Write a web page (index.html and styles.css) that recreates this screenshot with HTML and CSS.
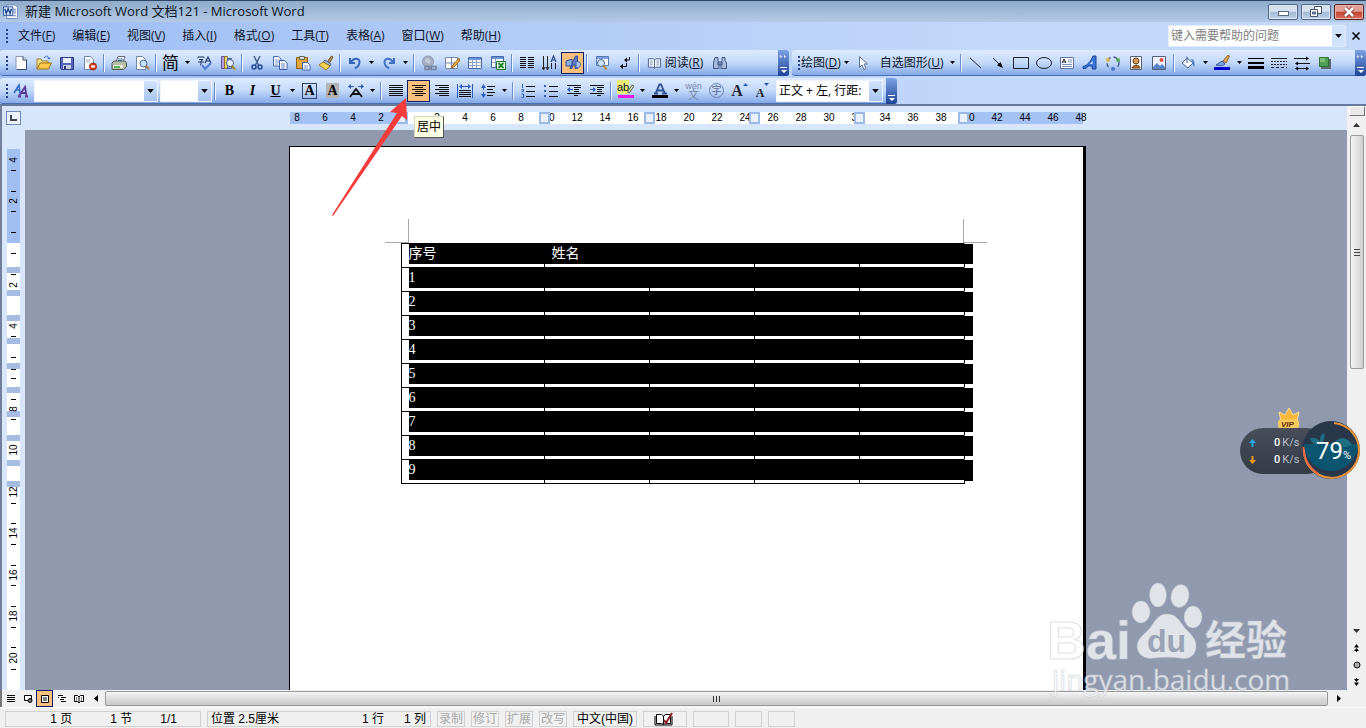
FILE: index.html
```html
<!DOCTYPE html>
<html lang="zh-CN">
<head>
<meta charset="utf-8">
<title>新建 Microsoft Word 文档121 - Microsoft Word</title>
<link rel="stylesheet" href="styles.css">
</head>
<body>
<svg class="defs" aria-hidden="true">
  <symbol id="arr" viewBox="0 0 5 3"><path d="M0 0h5L2.500 3z"/></symbol>
  <symbol id="cap" viewBox="0 0 11 26"><path d="M2 5l2 1.500-2 1.500zM6 5l2 1.500-2 1.500zM2 17h7v1H2zM3 20h6l-3 3z" fill="#fff"/></symbol>
</svg>

<header class="titlebar">
  <svg class="app" viewBox="0 0 16 16"><path d="M4 .5h9l2.500 2.500v12H4z" fill="#fff" stroke="#6d86b5"/><path d="M11 5h3M11 7h3M11 9h3M6 12h8" stroke="#5b7cbd"/><path d="M.5 2.500h10v9H.5z" fill="#e6effd" stroke="#24509e"/><path d="M2 4.500l1.500 5 2-5 2 5 1.500-5" fill="none" stroke="#174293" stroke-width="1.500"/></svg>
  <h1>新建 Microsoft Word 文档121 - Microsoft Word</h1>
  <div class="winbtns">
    <button class="wb" aria-label="最小化"><svg width="14" height="12"><rect x="2.500" y="5.500" width="10" height="4" fill="#fff" stroke="#5a6b85"/></svg></button>
    <button class="wb" aria-label="还原"><svg width="14" height="12"><path d="M5.500.500h7v7h-7z" fill="#fff" stroke="#465874"/><path d="M1.500 3.500h7v7h-7z" fill="#fff" stroke="#465874"/><path d="M3.500 6h3v2h-3z" fill="#8fa8c8" stroke="#465874"/></svg></button>
    <button class="wb close" aria-label="关闭"><svg width="14" height="12"><path d="M3 2l8 8M11 2l-8 8" stroke="#733" stroke-width="4"/><path d="M3 2l8 8M11 2l-8 8" stroke="#fff" stroke-width="2.500"/></svg></button>
  </div>
</header>

<div class="bars">
<nav class="menubar">
  <i class="grip"></i>
  <div class="menus">
    <button>文件(<u>F</u>)</button><button>编辑(<u>E</u>)</button><button>视图(<u>V</u>)</button><button>插入(<u>I</u>)</button><button>格式(<u>O</u>)</button><button>工具(<u>T</u>)</button><button>表格(<u>A</u>)</button><button>窗口(<u>W</u>)</button><button>帮助(<u>H</u>)</button>
  </div>
  <div class="ask"><input type="text" placeholder="键入需要帮助的问题" aria-label="键入需要帮助的问题"><button class="askarr" aria-label="展开"><svg class="tri big"><use href="#arr"/></svg></button></div>
  <button class="docx" aria-label="关闭文档"><svg width="8" height="8"><path d="M.5.500l7 7M7.500.500l-7 7" stroke="#000" stroke-width="1.500"/></svg></button>
</nav>

<div class="row">
  <div class="tb std" role="toolbar" aria-label="常用">
    <i class="grip"></i>
    <button class="b" aria-label="新建"><svg viewBox="0 0 16 16"><path d="M3 1.500h7l3.500 3.500v9.500H3z" fill="#fff" stroke="#8797b5"/><path d="M10 1.500V5h3.500v9.500H4" fill="none" stroke="#31456d"/></svg></button>
    <button class="b" aria-label="打开"><svg viewBox="0 0 16 16"><path d="M1 14V4h4l1 2h6v3" fill="#fbe48f" stroke="#a87a1c"/><path d="M1 14l3-6h11.500l-3 6z" fill="#ffc94d" stroke="#9c6d10"/><path d="M8 3c2-3 5-2 5 1l1.500-1M13 4l-1.500-1" fill="none" stroke="#3466b8"/></svg></button>
    <button class="b" aria-label="保存"><svg viewBox="0 0 16 16"><path d="M1.500 2.500h13v12h-12l-1-1z" fill="#5565bd" stroke="#2c3a80"/><path d="M4 3h8v5H4z" fill="#eaf0fd"/><path d="M4 10h8v4H4z" fill="#c7cfe8"/><path d="M5 11h2v3H5z" fill="#27346d"/></svg></button>
    <button class="b" aria-label="权限"><svg viewBox="0 0 16 16"><path d="M2.500 1.500h6l3 3v10h-9z" fill="#fff" stroke="#7183a7"/><path d="M4 5h5M4 7h4" stroke="#9ab"/><circle cx="11" cy="11.500" r="3.500" fill="#d6401f" stroke="#962a12"/><path d="M9 11.500h4" stroke="#fff" stroke-width="2"/></svg></button>
    <i class="sep"></i>
    <button class="b" aria-label="打印"><svg viewBox="0 0 16 16"><path d="M5 7l2-5.500h7L12 7z" fill="#fff" stroke="#667"/><path d="M7 4h5M7 5.500h4" stroke="#3b75c4"/><path d="M1 8l2-2h11l1.500 2v4l-3 2.500H1z" fill="#b5bfaa" stroke="#4d5a56"/><path d="M2 10h10v3H2z" fill="#e6ebd8"/><path d="M3 12h6" stroke="#2f9e37" stroke-width="1.500"/></svg></button>
    <button class="b" aria-label="打印预览"><svg viewBox="0 0 16 16"><path d="M2.500 1.500h6l3 3v10h-9z" fill="#fff" stroke="#7183a7"/><circle cx="9.500" cy="8.500" r="3.500" fill="#c5e2f8" stroke="#44658f"/><path d="M12 11l3 3" stroke="#a9803b" stroke-width="2"/></svg></button>
    <i class="sep"></i>
    <button class="b jian" aria-label="中文简繁转换">简</button><button class="a" aria-label="简繁选项"><svg class="tri"><use href="#arr"/></svg></button>
    <button class="b" aria-label="拼写和语法"><svg viewBox="0 0 16 16"><path d="M1 3V2h6v1M2 4.500h4L4 6M1 7h6M4 6v3.500l-1 .5" fill="none" stroke="#223a6b"/><path d="M8 8l3-6 3 6M9 6h4" fill="none" stroke="#223a6b" stroke-width="1.200"/><path d="M5 10l3 4 6-6" fill="none" stroke="#4f79cc" stroke-width="2"/></svg></button>
    <button class="b" aria-label="信息检索"><svg viewBox="0 0 16 16"><path d="M1.500 1.500h3v12h-3z" fill="#b59be0" stroke="#674f9c"/><path d="M4.500 1.500h3v12h-3z" fill="#ebd56b" stroke="#8c7625"/><path d="M7.500 3.500h4v10h-4z" fill="#8fb0e8" stroke="#3e609f"/><circle cx="10" cy="8" r="3.500" fill="#e5f2fd" stroke="#57617b"/><path d="M12 11l3 3.500" stroke="#a78422" stroke-width="2"/></svg></button>
    <i class="sep"></i>
    <button class="b" aria-label="剪切"><svg viewBox="0 0 16 16"><path d="M5 1l4.500 9M11 1L6.500 10" stroke="#486390" stroke-width="1.500"/><circle cx="5" cy="12" r="2" fill="none" stroke="#24489b" stroke-width="1.500"/><circle cx="11" cy="12" r="2" fill="none" stroke="#24489b" stroke-width="1.500"/></svg></button>
    <button class="b" aria-label="复制"><svg viewBox="0 0 16 16"><path d="M1.500 1.500h5l2.500 2.500v7H1.500z" fill="#fff" stroke="#4567ae"/><path d="M3 5h4M3 7h4M3 9h3" stroke="#7d9ad3"/><path d="M7.500 5.500h5l2.500 2.500v6.500H7.500z" fill="#fff" stroke="#3a5cab"/><path d="M9 9h4M9 11h4M9 13h4" stroke="#5f82cb"/></svg></button>
    <button class="b" aria-label="粘贴"><svg viewBox="0 0 16 16"><path d="M1.500 2.500h11v11h-11z" fill="#e2a83b" stroke="#8b6016"/><path d="M4.500 1.500h5v3h-5z" fill="#dcdcdc" stroke="#665"/><path d="M7.500 7.500h5l2.500 2.500v5H7.500z" fill="#fff" stroke="#3d60ab"/><path d="M9 11h4M9 13h4" stroke="#6e8fd0"/></svg></button>
    <button class="b" aria-label="格式刷"><svg viewBox="0 0 16 16"><path d="M9.500 6.500l4-5.500 1.500 1-3.500 6z" fill="#b58c50" stroke="#745226"/><path d="M7 5l6 4-1 2-7-4z" fill="#9fb3d8" stroke="#546a93"/><path d="M5 7l7 4-4 4-7-5z" fill="#f7d258" stroke="#a37a18"/></svg></button>
    <i class="sep"></i>
    <button class="b" aria-label="撤消"><svg viewBox="0 0 16 16"><path d="M3 3v5h5M3.500 7.500C7 2 13 3 12.500 7.500 12.300 10 10.500 12 8 13.500" fill="none" stroke="#3464bd" stroke-width="2"/></svg></button><button class="a" aria-label="撤消列表"><svg class="tri"><use href="#arr"/></svg></button>
    <button class="b" aria-label="恢复"><svg viewBox="0 0 16 16"><path d="M13 3v5H8M12.500 7.500C9 2 3 3 3.500 7.500 3.700 10 5.500 12 8 13.500" fill="none" stroke="#3f72c5" stroke-width="2"/></svg></button><button class="a" aria-label="恢复列表"><svg class="tri"><use href="#arr"/></svg></button>
    <i class="sep"></i>
    <button class="b" aria-label="超链接"><svg viewBox="0 0 16 16"><circle cx="7" cy="6.500" r="5.500" fill="#a3adbf" stroke="#8d99b0"/><path d="M4 4l3-1 3 3-2 3-4-2z" fill="#c1cad9"/><path d="M4 11.500h4v3H4zM10 11.500h5v3h-5zM7 13h4" fill="none" stroke="#75829c" stroke-width="1.500"/></svg></button>
    <button class="b" aria-label="表格和边框"><svg viewBox="0 0 16 16"><path d="M1.500 2.500h12v11h-12zM7.500 3v10M2 8h11" fill="#fff" stroke="#7587ad"/><path d="M15 3L9 10l-2 3 3-1 5.500-6z" fill="#efb23d" stroke="#9c641d"/></svg></button>
    <button class="b" aria-label="插入表格"><svg viewBox="0 0 16 16"><path d="M1.500 2.500h13v11h-13z" fill="#fff" stroke="#4467ab"/><path d="M2 3h12v2H2z" fill="#6c92d8"/><path d="M5.500 5v8M9.500 5v8M2 7.500h12M2 10.500h12" stroke="#8aa3cc"/></svg></button>
    <button class="b" aria-label="插入 Excel 工作表"><svg viewBox="0 0 16 16"><path d="M1.500 1.500h12v11h-12z" fill="#fff" stroke="#4467ab"/><path d="M2 2h11v2H2z" fill="#6c92d8"/><path d="M5.500 4v8M2 7.500h11" stroke="#8aa3cc"/><path d="M6.500 6.500h9v8h-9z" fill="#e7f5e5" stroke="#267a2d"/><path d="M8.500 8l5 5M13.500 8l-5 5" stroke="#208532" stroke-width="1.800"/></svg></button>
    <i class="sep"></i>
    <button class="b" aria-label="分栏"><svg viewBox="0 0 16 16"><path d="M1 3h6M1 5h6M1 7h6M1 9h6M1 11h6M1 13h6M9 3h6M9 5h6M9 7h6M9 9h6M9 11h6M9 13h6" transform="translate(0 -.5)" stroke="#111"/></svg></button>
    <button class="b" aria-label="更改文字方向"><svg viewBox="0 0 16 16"><path d="M1.500 1v13M5.500 1v13M9.500 8v6M13.500 8v6" stroke="#222"/><path d="M0 12l1.500 3L3 12M4 12l1.500 3L7 12" fill="none" stroke="#222"/><path d="M9 7l2.500-6L14 7M10 5h3" fill="none" stroke="#27488c" stroke-width="1.200"/></svg></button>
    <button class="b on" aria-label="绘图"><svg viewBox="0 0 16 16"><path d="M1 6l6-2v7H1z" fill="#8caae3" stroke="#35559d"/><path d="M5 13.500L10.500 1h2v12.500H10V10H8l-1 3.500z" fill="#5c80cc" stroke="#2b4a93"/><path d="M11 6.500c6-1 6 7 0 6.500z" fill="#aac1ed" stroke="#3b5fab"/></svg></button>
    <i class="sep"></i>
    <button class="b" aria-label="文档结构图"><svg viewBox="0 0 16 16"><path d="M2.500 1.500h12v9h-12z" fill="#fff" stroke="#5578b8"/><path d="M3 2h11v2H3z" fill="#7aa0df"/><circle cx="7" cy="8" r="3.500" fill="#cfe6f7" stroke="#476693"/><path d="M9.500 10.500l3 4" stroke="#b28a31" stroke-width="2"/></svg></button>
    <button class="b" aria-label="显示/隐藏编辑标记"><svg viewBox="0 0 16 16"><path d="M12.500 2v3H9M4 11.500h5.500V8" fill="none" stroke="#111"/><path d="M6 9v5l-3-2.500zM10 2.500v5L7 5z"/></svg></button>
    <i class="sep"></i>
    <button class="t read"><svg viewBox="0 0 16 16"><path d="M1.500 3.500h5l1.500 1 1.500-1h5v9h-5l-1.500 1-1.500-1h-5zM8 4.500v9" fill="#f5f8fe" stroke="#49618d"/><path d="M3 6h3M3 8h3M3 10h3M10 6h3M10 8h3M10 10h3" stroke="#8194b5"/></svg><span>阅读(<u>R</u>)</span></button>
    <button class="b" aria-label="查找"><svg viewBox="0 0 16 16"><path d="M3 2.500h3v3l1 3v5H1.500V8zM10 2.500h3v3l1.500 2.500v5.500H9v-5l1-3zM6 7h4v3H6z" fill="#a9bbdb" stroke="#3e5787"/></svg></button>
    <button class="cap" aria-label="工具栏选项"><svg><use href="#cap"/></svg></button>
  </div>
  <div class="tb draw" role="toolbar" aria-label="绘图">
    <i class="grip"></i>
    <button class="t">绘图(<u>D</u>)</button><button class="a" aria-label="绘图菜单"><svg class="tri"><use href="#arr"/></svg></button>
    <button class="b" aria-label="选择对象"><svg viewBox="0 0 16 16"><path d="M4.500 1.500v11l2.500-2.500 2 4.500 2-1-2-4.500h3.500z" fill="#f5f8ff" stroke="#667695"/></svg></button>
    <button class="t pad">自选图形(<u>U</u>)</button><button class="a" aria-label="自选图形菜单"><svg class="tri"><use href="#arr"/></svg></button>
    <i class="sep"></i>
    <button class="b" aria-label="直线"><svg viewBox="0 0 16 16"><path d="M3 3l11 10" stroke="#222"/></svg></button>
    <button class="b" aria-label="箭头"><svg viewBox="0 0 16 16"><path d="M3 3l7 7" stroke="#222"/><path d="M13 13l-6-2.500L10.500 7z"/></svg></button>
    <button class="b" aria-label="矩形"><svg viewBox="0 0 16 16"><path d="M.5 2.500h15v11H.500z" fill="none" stroke="#222"/></svg></button>
    <button class="b" aria-label="椭圆"><svg viewBox="0 0 16 16"><ellipse cx="8" cy="8" rx="7.500" ry="5.500" fill="none" stroke="#222"/></svg></button>
    <button class="b" aria-label="文本框"><svg viewBox="0 0 16 16"><path d="M1.500 2.500h13v11h-13z" fill="#fff" stroke="#5b75a8"/><path d="M3 8l2-4 2 4M4 7h2" fill="none" stroke="#223"/><path d="M9 5h4M9 7h4M3 9.500h10M3 11.500h10" stroke="#7f93b8"/></svg></button>
    <button class="b" aria-label="艺术字"><svg viewBox="0 0 16 16"><path d="M1 11.500C5 11 9 6 11 1h3v13h-4l.5-3H6l-2 2.500H1z" fill="#3f77d8" stroke="#1a4298"/><path d="M8 9h2.500V6z" fill="#e4eeff"/></svg></button>
    <button class="b" aria-label="图示"><svg viewBox="0 0 16 16"><circle cx="8" cy="8" r="6" fill="none" stroke="#4b6299" stroke-width="1.500" stroke-dasharray="4 3"/><circle cx="3" cy="5" r="2" fill="#dbb440"/><circle cx="13" cy="5" r="2" fill="#56a953"/><circle cx="8" cy="14" r="2" fill="#4e78cd"/></svg></button>
    <button class="b" aria-label="剪贴画"><svg viewBox="0 0 16 16"><path d="M2.500 1.500h11v13h-11z" fill="#fff" stroke="#555f78"/><circle cx="8" cy="6" r="3" fill="#d99d50" stroke="#563c1a"/><path d="M4 13c0-3 8-4 8 0z" fill="#c1752c" stroke="#60411d"/></svg></button>
    <button class="b" aria-label="图片"><svg viewBox="0 0 16 16"><path d="M1.500 1.500h13v13h-13z" fill="#eef4ff" stroke="#555f78"/><circle cx="10.500" cy="5" r="2" fill="#df5040"/><path d="M2 12l4-4 3 3 2-2 3.500 3.500V14H2z" fill="#5884c8"/></svg></button>
    <i class="sep"></i>
    <button class="b" aria-label="填充颜色"><svg viewBox="0 0 16 16"><path d="M2 8l5-5 6 5-5 5z" fill="#f6f9ff" stroke="#4c628d"/><path d="M7 8V1.500" stroke="#4c628d"/><path d="M11 4c3 0 4 3 3.500 8-1.500-1-2-3-2-5z" fill="#4b80ca"/></svg></button><button class="a" aria-label="填充颜色列表"><svg class="tri"><use href="#arr"/></svg></button>
    <button class="b" aria-label="线条颜色"><svg viewBox="0 0 16 16"><path d="M9 6l5-6 1.500 1L12 8z" fill="#e3a745" stroke="#8a6326"/><path d="M2 10l6-4 3 3c-2 2-5 2-9 1z" fill="#7fa3de" stroke="#3a5996"/><path d="M0 12h16v3H0z" fill="#00c"/></svg></button><button class="a" aria-label="线条颜色列表"><svg class="tri"><use href="#arr"/></svg></button>
    <button class="b" aria-label="线型"><svg viewBox="0 0 16 16"><path d="M0 3h16v1H0zM0 7h16v2H0zM0 11h16v3H0z"/></svg></button>
    <button class="b" aria-label="虚线线型"><svg viewBox="0 0 16 16"><path d="M0 3.500h16" stroke="#222"/><path d="M0 6.500h16M0 9.500h16" stroke="#222" stroke-dasharray="2 1"/><path d="M0 12.500h16" stroke="#222" stroke-dasharray="3 2"/></svg></button>
    <button class="b" aria-label="箭头样式"><svg viewBox="0 0 16 16"><path d="M0 3.500h13M3 8.500h13M2 13.500h12" stroke="#111"/><path d="M12 1.500l3 2-3 2zM4 6.500l-3 2 3 2zM4 11.500l-3 2 3 2zM12 11.500l3 2-3 2z"/></svg></button>
    <button class="b" aria-label="阴影样式"><svg viewBox="0 0 16 16"><path d="M4 4h10v10H4z" fill="#5b6b70"/><path d="M2.500 2.500h9v9h-9z" fill="#4ea150" stroke="#2c7131"/><path d="M3 3h5v4H3z" fill="#7ec07b"/></svg></button>
    <button class="cap" aria-label="工具栏选项"><svg><use href="#cap"/></svg></button>
  </div>
</div>

<div class="row last">
  <div class="tb" role="toolbar" aria-label="格式">
    <i class="grip"></i>
    <button class="b" aria-label="样式和格式"><svg viewBox="0 0 16 16"><path d="M1 10l5-8 1 8M3 7h4" fill="none" stroke="#2f6ac4" stroke-width="1.500"/><path d="M6 13l6-9 1.500 9M8 10h5M5 13.500h3M12 13.500h3" fill="none" stroke="#5a3b9c" stroke-width="1.800"/></svg></button>
    <span class="combo style"><select aria-label="样式"><option></option></select><i><svg class="tri big"><use href="#arr"/></svg></i></span>
    <span class="combo size"><select aria-label="字号"><option></option></select><i><svg class="tri big"><use href="#arr"/></svg></i></span>
    <i class="sep"></i>
    <button class="b ser" aria-label="加粗">B</button><button class="b ser it" aria-label="倾斜">I</button><button class="b ser"><u>U</u></button><button class="a" aria-label="下划线列表"><svg class="tri"><use href="#arr"/></svg></button>
    <button class="b ser" aria-label="字符边框"><span class="boxed">A</span></button><button class="b ser" aria-label="字符底纹"><span class="shade">A</span></button>
    <button class="b" aria-label="字符缩放"><svg viewBox="0 0 16 16"><path d="M2 14l6-8 6 8M4 11h8" fill="none" stroke="#111" stroke-width="1.800"/><path d="M1 3.500h5M10 3.500h5" stroke="#2a5cc0"/><path d="M3 1L0 3.500 3 6zM13 1l3 2.500L13 6z" fill="#2a5cc0"/></svg></button><button class="a" aria-label="字符缩放列表"><svg class="tri"><use href="#arr"/></svg></button>
    <i class="sep"></i>
    <button class="b" aria-label="两端对齐"><svg viewBox="0 0 16 16"><path d="M1 2.500h14M1 4.500h14M1 6.500h14M1 8.500h14M1 10.500h14M1 12.500h14" stroke="#111"/></svg></button>
    <button class="b on" aria-label="居中" aria-describedby="tip"><svg viewBox="0 0 16 16"><path d="M1 2.500h14M4 4.500h8M1 6.500h14M4 8.500h8M1 10.500h14M4 12.500h8" stroke="#111"/></svg></button>
    <button class="b" aria-label="右对齐"><svg viewBox="0 0 16 16"><path d="M1 2.500h14M5 4.500h10M1 6.500h14M5 8.500h10M1 10.500h14M5 12.500h10" stroke="#111"/></svg></button>
    <button class="b" aria-label="分散对齐"><svg viewBox="0 0 16 16"><path d="M.5 1v14M15.500 1v14M3 3.500h10" stroke="#2a5cc0"/><path d="M5 1L2 3.500 5 6zM11 1l3 2.500L11 6z" fill="#2a5cc0"/><path d="M2 7.500h12M2 9.500h12M2 11.500h12M2 13.500h12" stroke="#111"/></svg></button>
    <button class="b" aria-label="行距"><svg viewBox="0 0 16 16"><path d="M3.500 2v12" stroke="#2a5cc0" stroke-dasharray="5 2"/><path d="M1 5l2.500-4L6 5zM1 11l2.500 4L6 11z" fill="#2a5cc0"/><path d="M7 3.500h8M7 6.500h6M7 9.500h8M7 12.500h6" stroke="#111"/></svg></button><button class="a" aria-label="行距列表"><svg class="tri"><use href="#arr"/></svg></button>
    <i class="sep"></i>
    <button class="b" aria-label="编号"><svg viewBox="0 0 16 16"><path d="M2.500 1v4M1.500 6.500h2v2h-2M1.500 11h2v3.500h-2" fill="none" stroke="#2a5cc0"/><path d="M6 3.500h9M6 8.500h9M6 13.500h9" stroke="#111"/></svg></button>
    <button class="b" aria-label="项目符号"><svg viewBox="0 0 16 16"><path d="M1 2h2v2H1zM1 7h2v2H1zM1 12h2v2H1z" fill="#3563b8"/><path d="M6 3.500h9M6 8.500h9M6 13.500h9" stroke="#111"/></svg></button>
    <button class="b" aria-label="减少缩进量"><svg viewBox="0 0 16 16"><path d="M1 2.500h14M8 4.500h7M8 6.500h5M8 8.500h5M1 10.500h14M8 12.500h4" stroke="#111"/><path d="M1 6.500l3-2.500v2h3v1H4v2z" fill="#2a5cc0"/></svg></button>
    <button class="b" aria-label="增加缩进量"><svg viewBox="0 0 16 16"><path d="M1 2.500h14M8 4.500h7M8 6.500h5M8 8.500h5M1 10.500h14M8 12.500h4" stroke="#111"/><path d="M7 6.500L4 4v2H1v1h3v2z" fill="#2a5cc0"/></svg></button>
    <i class="sep"></i>
    <button class="b hl" aria-label="突出显示"><span>ab</span><svg viewBox="0 0 16 16"><path d="M10 8l4-6 2 1-4 6-2 1z" fill="#dce6b0" stroke="#5b6650"/><path d="M0 12h16v3H0z" fill="#e81ce8"/></svg></button><button class="a" aria-label="突出显示列表"><svg class="tri"><use href="#arr"/></svg></button>
    <button class="b" aria-label="字体颜色"><svg viewBox="0 0 16 16"><path d="M3.500 10.500l4-9h1.500l4 9M5.500 7.500h6M2 10.500h4M10 10.500h5" fill="none" stroke="#2c4f96" stroke-width="1.800"/><path d="M0 12h16v3H0z"/></svg></button><button class="a" aria-label="字体颜色列表"><svg class="tri"><use href="#arr"/></svg></button>
    <button class="b wen" aria-label="拼音指南"><span>wén</span><span>文</span></button>
    <button class="b" aria-label="带圈字符"><span class="ring">字</span></button>
    <button class="b ser grow" aria-label="增大字体">A<svg width="5" height="3"><path d="M0 3h5L2.500 0z" fill="#2a5cc0"/></svg></button>
    <button class="b ser grow small" aria-label="缩小字体">A<svg width="5" height="3"><path d="M0 0h5L2.500 3z" fill="#2a5cc0"/></svg></button>
    <span class="combo fmt"><select aria-label="格式"><option>正文 + 左, 行距:</option></select><i><svg class="tri big"><use href="#arr"/></svg></i></span>
    <button class="cap" aria-label="工具栏选项"><svg viewBox="0 0 11 26"><path d="M2 17h7v1H2zM3 20h6l-3 3z" fill="#fff"/></svg></button>
  </div>
</div>
</div>

<main class="work">
  <div class="pane">
    <div class="hruler">
      <button class="corner" aria-label="制表符"><svg width="7" height="6"><path d="M1 0v5h6" fill="none" stroke="#445" stroke-width="2"/></svg></button>
      <div class="center"><div class="scale">
        <div class="band">
          <span>8</span><span>6</span><span>4</span><span>2</span><span></span><span>2</span><span>4</span><span>6</span><span>8</span><span>10</span><span>12</span><span>14</span><span>16</span><span>18</span><span>20</span><span>22</span><span>24</span><span>26</span><span>28</span><span>30</span><span>32</span><span>34</span><span>36</span><span>38</span><span>40</span><span>42</span><span>44</span><span>46</span><span>48</span>
        </div>
        <div class="marks"><i></i><i></i><i></i><i></i><i></i><i></i></div>
        <div class="tip" id="tip" role="tooltip">居中</div>
      </div></div>
    </div>
    <div class="lower">
      <svg class="vruler" width="24" height="560" viewBox="0 0 24 560">
        <path d="M5 19h13v94H5z" fill="#a2bff2"/><path d="M5 113h13v447H5z" fill="#fff"/>
        <path d="M5 137h13v6H5zM5 160h13v6H5zM5 185h13v6H5zM5 208h13v6H5zM5 233h13v6H5zM5 257h13v6H5zM5 281h13v6H5zM5 305h13v6H5zM5 330h13v6H5zM5 351h13v6H5z" fill="#a5bde3"/>
        <path d="M9 40.500h5M9 61.500h5M9 81.500h5M9 102.500h5M9 123.500h5M9 144.500h5M9 206.500h5M9 227.500h5M9 239.500h5M9 248.500h5M9 269.500h5M9 289.500h5M9 373.500h5M9 393.500h5M9 414.500h5M9 435.500h5M9 455.500h5M9 476.500h5M9 497.500h5M9 517.500h5M9 539.500h5" stroke="#000"/>
        <g class="vnum"><text transform="translate(15 30)rotate(-90)">4</text><text transform="translate(15 71)rotate(-90)">2</text><text transform="translate(15 155)rotate(-90)">2</text><text transform="translate(15 196)rotate(-90)">4</text><text transform="translate(15 279)rotate(-90)">8</text><text transform="translate(15 320)rotate(-90)">10</text><text transform="translate(15 362)rotate(-90)">12</text><text transform="translate(15 403)rotate(-90)">14</text><text transform="translate(15 445)rotate(-90)">16</text><text transform="translate(15 486)rotate(-90)">18</text><text transform="translate(15 528)rotate(-90)">20</text></g>
      </svg>
      <div class="desk">
        <article class="page">
          <div class="crops"><i class="cl"></i><i class="cr"></i></div>
          <table>
            <colgroup><col class="c1"><col class="cn"><col class="cn"><col class="cn"><col class="cn"><col class="ce"></colgroup>
            <tr><td>序号</td><td class="name" colspan="2">姓名</td><td></td><td></td><td></td></tr>
            <tr><td>1</td><td></td><td></td><td></td><td></td><td></td></tr>
            <tr><td>2</td><td></td><td></td><td></td><td></td><td></td></tr>
            <tr><td>3</td><td></td><td></td><td></td><td></td><td></td></tr>
            <tr><td>4</td><td></td><td></td><td></td><td></td><td></td></tr>
            <tr><td>5</td><td></td><td></td><td></td><td></td><td></td></tr>
            <tr><td>6</td><td></td><td></td><td></td><td></td><td></td></tr>
            <tr><td>7</td><td></td><td></td><td></td><td></td><td></td></tr>
            <tr><td>8</td><td></td><td></td><td></td><td></td><td></td></tr>
            <tr><td>9</td><td></td><td></td><td></td><td></td><td></td></tr>
          </table>
        </article>
      </div>
    </div>
  </div>
  <div class="vscroll">
    <i class="split"></i>
    <button aria-label="向上"><svg width="7" height="4"><path d="M0 4h7L3.500 0z" fill="#333"/></svg></button>
    <div class="vtrack"><div class="vthumb"><i></i><i></i><i></i></div></div>
    <button aria-label="向下"><svg width="7" height="4"><path d="M0 0h7L3.500 4z" fill="#333"/></svg></button>
    <button aria-label="前一页"><svg width="7" height="8"><path d="M1 3.500L3.500 0 6 3.500zM1 7L3.500 4 6 7zM3 6h1v2H3z"/></svg></button>
    <button aria-label="选择浏览对象"><svg width="8" height="8"><circle cx="4" cy="4" r="3" fill="#aaa" stroke="#000"/></svg></button>
    <button aria-label="下一页"><svg width="7" height="8"><path d="M1 1h5L3.500 4zM1 4.500h5L3.500 8zM3 0h1v2H3z"/></svg></button>
  </div>
</main>

<div class="hscroll">
  <div class="views">
    <button aria-label="普通视图"><svg viewBox="0 0 12 12"><path d="M2 2.500h8M2 4.500h8M2 6.500h8M2 8.500h8" stroke="#000"/></svg></button>
    <button aria-label="Web 版式视图"><svg viewBox="0 0 12 12"><path d="M2.500 2.500h7v5h-7z" fill="#fff" stroke="#000"/><circle cx="8" cy="7.500" r="2" fill="#777" stroke="#000"/></svg></button>
    <button class="on" aria-label="页面视图"><svg viewBox="0 0 12 12"><path d="M2.500 2.500h7v7h-7zM4 5h4M4 7h4" fill="#fff" stroke="#000"/></svg></button>
    <button aria-label="大纲视图"><svg viewBox="0 0 12 12"><path d="M2 2.500h5M5 4.500h5M4 6.500h4M5 8.500h5M2 4.500h1" stroke="#000"/></svg></button>
    <button aria-label="阅读版式"><svg viewBox="0 0 12 12"><path d="M1.500 2.500h3L6 4l1.500-1.500h3v6h-3L6 10 4.500 8.500h-3zM6 4v6M3 5h1M3 7h1M8 5h1M8 7h1" fill="#fff" stroke="#000"/></svg></button>
  </div>
  <button class="ha" aria-label="向左"><svg width="4" height="7"><path d="M4 0v7L0 3.500z"/></svg></button>
  <div class="hthumb"><i></i><i></i><i></i></div>
  <button class="ha right" aria-label="向右"><svg width="4" height="7"><path d="M0 0v7l4-3.500z"/></svg></button>
</div>

<footer class="status">
  <div class="f f1"><span>1 页</span><span>1 节</span><span>1/1</span></div>
  <div class="f f2"><span>位置 2.5厘米</span><span class="ln">1 行</span><span>1 列</span></div>
  <div class="f dim">录制</div><div class="f dim">修订</div><div class="f dim">扩展</div><div class="f dim">改写</div>
  <div class="f lang">中文(中国)</div>
  <div class="f book"><svg width="19" height="14"><path d="M2.500 2.500h5l2 1.500 2-1.500h5v9h-5l-2 1-2-1h-5zM9.500 4v8" fill="#fff" stroke="#000"/><path d="M1 4v9h17V4" fill="none" stroke="#000"/><path d="M10 8l2 3 6-10" fill="none" stroke="#8c1c24" stroke-width="2"/></svg></div>
  <div class="f e1"></div><div class="f e2"></div><div class="f e2"></div>
</footer>

<svg class="pointer" width="80" height="122" viewBox="0 0 80 122" aria-hidden="true"><path d="M75 2L59 16l7 1L1 119l1 1L71 20l5 4z" fill="#f23c3c"/></svg>

<aside class="meter">
  <svg class="crown" width="24" height="24" viewBox="0 0 24 24"><path d="M4 14L2 5l6 3 4-7 4 7 6-3-2 9z" fill="#f7b73b" stroke="#fbe19c"/><rect x="1" y="12" width="21" height="10" rx="4" fill="#fbca5e"/><text x="4" y="20">VIP</text></svg>
  <div class="speed">
    <p><svg width="7" height="8"><path d="M3.500 0L7 4H4.500v4h-2V4H0z" fill="#22a7e0"/></svg><b>0</b>K/s</p>
    <p><svg width="7" height="8"><path d="M3.500 8L7 4H4.500V0h-2v4H0z" fill="#f29a1f"/></svg><b>0</b>K/s</p>
  </div>
  <div class="dial"><svg width="60" height="60" viewBox="0 0 60 60"><circle cx="30" cy="30" r="29" fill="#28384a"/><path d="M3 24a27 27 0 0 0 54 0z" fill="#0b5570"/><path d="M9 18c5-1 8 0 10 4 0-5 1-8 4-9 2 6-1 11-7 11-4 0-6-2-7-6zM34 22c4-6 14-5 17 3-6 3-11 3-17-3z" fill="#1f6d80"/><path d="M33 3A27.500 27.500 0 1 1 3 30" fill="none" stroke="#e6923a" stroke-width="2"/><path d="M2.500 27c0 12 6 21 15 27" fill="none" stroke="#e96a4a" stroke-width="2"/></svg><span>79<small>%</small></span></div>
</aside>

<svg class="mark" width="250" height="120" viewBox="0 0 250 120" aria-hidden="true">
  <g fill="#fff" fill-opacity=".72" stroke="#b9bfcb" stroke-opacity=".5">
    <text class="bai" x="1" y="79">Bai</text>
    <ellipse cx="95" cy="32" rx="9" ry="11"/><ellipse cx="112" cy="15" rx="8.500" ry="12"/><ellipse cx="134" cy="16" rx="9" ry="11.500" transform="rotate(12 134 16)"/><ellipse cx="147" cy="37" rx="9" ry="11"/>
    <path d="M121 34c9 0 12 6 17 13 6 7 13 11 12 21-1 9-9 12-17 10-8-1-16-1-24 0-10 2-17-3-18-11 0-9 7-12 13-19 5-7 8-14 17-14z"/>
    <text class="jy" x="159" y="75">经验</text>
    <text class="url" x="6" y="110">jingyan.baidu.com</text>
  </g>
  <text class="du" x="101" y="72">du</text>
</svg>
</body>
</html>
```
FILE: styles.css
```css
* { box-sizing: border-box; }
body {
  margin: 0; height: 100vh; overflow: hidden; position: relative;
  display: flex; flex-direction: column;
  font: 12px/16px "Open Sans", "Noto Sans CJK SC", sans-serif; color: #0c1526; background: #f0f0f0;
}
button { border: 0; padding: 0; margin: 0; background: none; font: inherit; color: inherit; display: flex; align-items: center; justify-content: center; }
i { display: block; font-style: normal; }
svg { display: block; flex: none; }
.defs { position: absolute; width: 0; height: 0; }

.titlebar { flex: none; height: 22px; display: flex; align-items: center; padding: 0 2px 0 3px; gap: 7px; border-top: 1px solid #2b4468; background: linear-gradient(#8fabc9, #b3cae6); }
.app { width: 15px; height: 16px; }
h1 { margin: 0; font-size: 13px; font-weight: 400; line-height: 18px; padding-bottom: 2px; flex: 1; }
.winbtns { display: flex; gap: 3px; }
.wb { width: 30px; height: 16px; border: 1px solid #50678a; border-radius: 2px; background: linear-gradient(#d5e1ef 45%, #a3bad6 50%, #bdd0e6); box-shadow: inset 0 0 0 1px #dbe7f4; }
.wb.close { background: linear-gradient(#e0a095 45%, #c14430 50%, #d8705d); border-color: #5c2222; box-shadow: inset 0 0 0 1px #e8b3aa; }

.bars { flex: none; background: linear-gradient(90deg, #9fbdf5, #c4d9fa 75%); border-bottom: 2px solid #66799c; }
.menubar { height: 28px; display: flex; align-items: center; padding-left: 3px; }
.grip { width: 9px; height: 14px; flex: none; background: linear-gradient(#27408b 2px, transparent 2px) 3px 0 / 2px 4px repeat-y; }
.menus { display: flex; gap: 17px; flex: 1; padding-left: 6px; }
.ask { display: flex; height: 22px; width: 178px; background: #fff; border: 1px solid #e4edfb; }
.ask input { flex: 1; min-width: 0; border: 0; padding: 0 2px; font: inherit; background: none; }
.ask input::placeholder { color: #808080; opacity: 1; }
.askarr { width: 13px; background: #d0e1fb; }
.docx { width: 20px; height: 22px; }
.tri { width: 5px; height: 3px; }
.tri.big { width: 7px; height: 4px; }

.row { display: flex; gap: 3px; padding-bottom: 2px; }
.last { padding-bottom: 0; }
.tb { height: 26px; display: flex; align-items: center; padding-left: 3px; border-radius: 3px; background: linear-gradient(#deebfe, #c3d9fa 50%, #84a9e7); border-bottom: 1px solid #4a6fb3; }
.tb .grip { margin-right: -3px; }
.std .cap { margin-left: 47px; }
.draw { flex: 1; }
.draw .cap { margin-left: auto; }
.b { width: 23px; height: 22px; flex: none; }
.b > svg { width: 16px; height: 16px; }
.on { background: #fdc07c; border: 1px solid #0b1c66; }
.a { width: 11px; height: 22px; flex: none; }
.sep { width: 6px; height: 18px; flex: none; background: linear-gradient(90deg, transparent 2px, #6a8ccb 2px, #6a8ccb 3px, #f0f6ff 3px, #f0f6ff 4px, transparent 4px); }
.t { height: 22px; flex: none; white-space: nowrap; }
.pad { padding: 0 3px 0 5px; }
.read { gap: 3px; width: 66px; }
.read svg { width: 15px; height: 16px; }
.jian { font-size: 17px; color: #000; }
.cap { width: 11px; height: 26px; flex: none; border-radius: 0 3px 3px 0; background: linear-gradient(#7da2e3, #1d4397); }
.cap svg { width: 11px; height: 26px; }
.combo { display: flex; height: 22px; flex: none; background: #fff; border: 1px solid #eef4fd; margin-left: 2px; color: #000; }
.combo select { flex: 1; min-width: 0; border: 0; padding: 0 2px; appearance: none; background: none; font: inherit; color: inherit; white-space: nowrap; }
.combo i { width: 13px; display: flex; align-items: center; justify-content: center; background: linear-gradient(#d3e3fc, #a7c4f1); }
.style { width: 124px; }
.size { width: 52px; }
.fmt { width: 107px; margin-right: 3px; }
.ser { font: 700 14px/16px "Liberation Serif", serif; color: #000; }
.it { font-style: italic; }
.boxed { border: 1px solid #31456d; width: 15px; height: 16px; line-height: 14px; }
.shade { background: #b3b3b3; width: 13px; height: 15px; line-height: 15px; }
.hl { position: relative; }
.hl span { position: absolute; left: 3px; top: 0; font: 11px/14px "Liberation Sans", sans-serif; background: #ecec77; }
.hl svg { position: relative; }
.wen { flex-direction: column; color: #7687ab; font: 9px/8px "Liberation Sans", "Noto Sans CJK SC", sans-serif; }
.wen span + span { font-size: 11px; line-height: 10px; }
.ring { width: 15px; height: 15px; border: 1px solid #6c80a8; border-radius: 50%; font-size: 10px; line-height: 13px; color: #52668e; }
.grow { align-items: flex-start; padding-top: 3px; font-size: 16px; color: #223; }
.grow > svg { width: 5px; height: 3px; }
.small { font-size: 12px; line-height: 20px; }

.work { flex: 1; min-height: 0; display: flex; border-left: 2px solid #72809b; }
.pane { flex: 1; min-width: 0; display: flex; flex-direction: column; }
.hruler { flex: none; height: 24px; background: #d8e6fc; display: flex; align-items: center; }
.corner { width: 15px; height: 14px; margin: 0 4px; border: 1px solid #6f89bd; background: #eef4fe; }
.center { flex: 1; display: flex; justify-content: center; padding-left: 2px; }
.scale { width: 796px; position: relative; }
.band { display: flex; height: 12px; margin: 0 2px 0 1px; background: linear-gradient(90deg, #a5c2f5 118px, #fff 118px, #fff 673px, #a5c2f5 673px); font: 10px/12px "Liberation Sans", sans-serif; color: #000; }
.band span { flex: none; width: 28px; text-align: center; }
.band span:first-child { margin-left: -7px; }
.marks i { position: absolute; top: 0; width: 11px; height: 12px; border: 2px solid #9db9e6; background: #e9f1fd; }
.marks i:nth-child(1) { left: 107px; }
.marks i:nth-child(2) { left: 250px; }
.marks i:nth-child(3) { left: 355px; }
.marks i:nth-child(4) { left: 460px; }
.marks i:nth-child(5) { left: 565px; }
.marks i:nth-child(6) { left: 669px; }
.tip { position: absolute; left: 125px; top: 4px; width: 30px; height: 22px; z-index: 2; border: 1px solid #777; border-color: #d8d8c0 #555 #555 #d8d8c0; background: #ffffe3; line-height: 20px; text-align: center; color: #000; }
.lower { flex: 1; min-height: 0; display: flex; overflow: hidden; }
.vruler { background: #d8e6fc; margin-right: -1px; }
.vnum { font: 10px "Liberation Sans", sans-serif; text-anchor: middle; }
.vnum text { fill: #000; }
.desk { flex: 1; min-width: 0; display: flex; justify-content: center; padding: 16px 0 0 1px; background: #9099ae; }
.page { width: 796px; flex: none; min-height: 600px; background: #fff; border: 1px solid #000; border-right-width: 2px; box-shadow: 1px 0 #000; padding-top: 72px; }
.crops { display: flex; justify-content: space-between; padding: 0 96px 0 95px; }
.crops i { width: 24px; height: 24px; border: 0 solid #aaa; border-bottom-width: 1px; }
.crops .cl { border-right-width: 1px; }
.crops .cr { border-left-width: 1px; }
table { margin-left: 111px; width: 572px; table-layout: fixed; border-spacing: 0; color: #fff; font: 14px/20px "Liberation Serif", "Noto Sans CJK SC", serif; }
.c1 { width: 143px; }
.cn { width: 105px; }
.ce { width: 9px; }
td { height: 24px; padding: 0 0 3px; border: 0 solid #000; border-width: 1px 0 0 1px; background: #000 content-box; vertical-align: top; white-space: nowrap; }
td::after { content: "\200b"; }
td:first-child { padding-left: 7px; }
.name { text-indent: 7px; }
td:last-child { border-top-color: transparent; }
tr:last-child td:not(:last-child) { border-bottom-width: 1px; height: 25px; }

.vscroll { width: 19px; flex: none; display: flex; flex-direction: column; align-items: center; background: #f0f0f0; }
.vscroll button { width: 17px; height: 17px; }
.split { width: 16px; height: 10px; border: 1px solid #888; border-color: #fff #777 #777 #fff; background: #e9e9e9; flex: none; }
.vtrack { flex: 1; padding-top: 2px; }
.vthumb { width: 14px; height: 234px; border: 1px solid #9b9b9b; border-radius: 2px; background: linear-gradient(90deg, #f4f4f4, #d0d0d0); display: flex; flex-direction: column; align-items: center; justify-content: center; gap: 2px; }
.vthumb i { width: 6px; height: 1px; background: #444; }

.hscroll { height: 17px; flex: none; display: flex; align-items: center; background: #f0f0f0; border-left: 2px solid #777; }
.views { display: flex; }
.views button { width: 17px; height: 17px; }
.views svg { width: 12px; height: 12px; }
.ha { width: 18px; height: 17px; }
.hthumb { flex: 1; height: 15px; border: 1px solid #999; border-radius: 2px; background: linear-gradient(#f6f6f6, #dcdcdc 50%, #c9c9c9); display: flex; align-items: center; justify-content: center; gap: 2px; }
.hthumb i { width: 1px; height: 6px; background: #333; }
.right { width: 38px; padding-right: 16px; }

.status { height: 21px; flex: none; display: flex; gap: 6px; padding: 3px 5px 1px; border-top: 1px solid #fff; font: 12px/14px "Liberation Sans", "Noto Sans CJK SC", sans-serif; color: #000; }
.f { border: 1px solid #d0d0d0; display: flex; align-items: center; justify-content: center; white-space: nowrap; }
.f1 { width: 196px; justify-content: flex-end; gap: 38px; padding-right: 23px; }
.f1 span:last-child { margin-left: -10px; }
.f2 { width: 224px; padding: 0 4px 0 3px; gap: 20px; }
.ln { margin-left: auto; }
.dim { width: 28px; color: #aaa; }
.lang { width: 64px; }
.book { width: 44px; padding-right: 4px; }
.e1 { width: 36px; }
.e2 { width: 27px; }

.pointer { position: absolute; left: 331px; top: 96px; z-index: 3; }
.meter { position: absolute; right: 5px; top: 420px; width: 121px; height: 60px; color: #fff; }
.crown { position: absolute; left: 37px; top: -13px; }
.crown text { font: italic 700 8px "Liberation Sans", sans-serif; fill: #5b2c08; }
.speed { position: absolute; left: 0; top: 8px; width: 90px; height: 46px; border-radius: 23px; background: linear-gradient(#474e5a, #343b47); padding: 6px 9px; font: 11px/17px Roboto, sans-serif; color: #b9bfc9; }
.speed p { margin: 0; display: flex; align-items: center; }
.speed svg { margin-right: 18px; }
.speed b { font-weight: 500; color: #fff; margin-right: 2px; }
.dial { position: absolute; right: 0; top: 0; }
.dial span { position: absolute; left: 15px; top: 18px; font: 24px/26px Roboto, sans-serif; white-space: nowrap; }
.dial small { font-size: 11px; }
.mark { position: absolute; right: 70px; bottom: 28px; pointer-events: none; }
.bai { font: 700 54px "Liberation Sans", sans-serif; }
.jy { font: 700 41px "Noto Sans CJK SC", sans-serif; }
.url { font: 28px "Open Sans", sans-serif; }
.du { font: 700 32px "Liberation Sans", sans-serif; fill: #9aa2b5; }
```
